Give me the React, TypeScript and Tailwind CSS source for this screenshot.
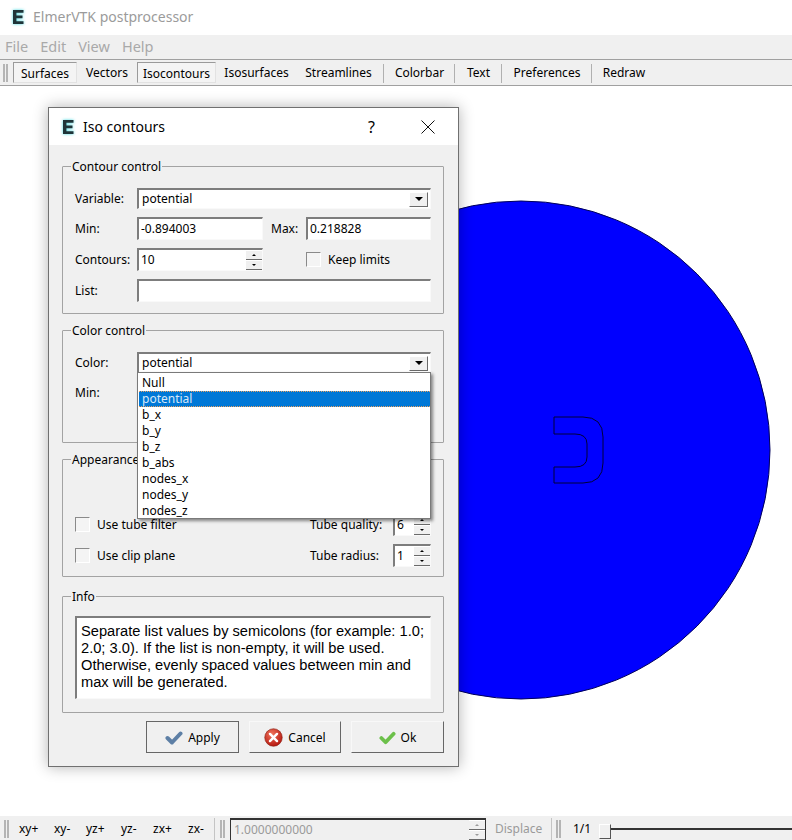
import type { ReactNode } from 'react'

const UI_FONT = "font-['Noto_Sans',sans-serif]"

const TOOLBAR_ITEMS = [
  { label: 'Surfaces', width: 'w-[64px]', checked: true },
  { label: 'Vectors', width: 'w-[60px]' },
  { label: 'Isocontours', width: 'w-[79px]', checked: true },
  { label: 'Isosurfaces', width: 'w-[81px]' },
  { label: 'Streamlines', width: 'w-[87px] pr-[4px]', sep: true },
  { label: 'Colorbar', width: 'w-[71px]', sep: true },
  { label: 'Text', width: 'w-[47px]', sep: true },
  { label: 'Preferences', width: 'w-[90px]', sep: true },
  { label: 'Redraw', width: 'w-[64px]' },
]

const COLOR_OPTIONS = ['Null', 'potential', 'b_x', 'b_y', 'b_z', 'b_abs', 'nodes_x', 'nodes_y', 'nodes_z']

function Logo({ className }: { className: string }) {
  return (
    <svg viewBox="0 0 11 14" className={`${className} drop-shadow-[0_0_1.5px_#3fd8e0]`}>
      <path d="M0 0H10.5V2.8H3.4V5.5H9.5V8.2H3.4V11.2H10.5V14H0Z" fill="#1f3438" />
    </svg>
  )
}

function Handle({ className = '' }: { className?: string }) {
  return (
    <div className={`flex gap-[1px] shrink-0 ${className}`}>
      <div className="w-[2px] border border-[#b4b4b4] bg-white" />
      <div className="w-[2px] border border-[#b4b4b4] bg-white" />
    </div>
  )
}

function Sunken({ className = '', children }: { className?: string; children?: ReactNode }) {
  return (
    <div
      className={`flex items-center bg-white border-t-2 border-l-2 border-r border-b border-t-[#7d7d7d] border-l-[#7d7d7d] border-r-[#f9f9f9] border-b-[#f9f9f9] ${className}`}
    >
      {children}
    </div>
  )
}

function ComboBox({ value }: { value: string }) {
  return (
    <Sunken className="h-[21px] w-[294px] pl-[3px] pr-[2px] justify-between">
      <span>{value}</span>
      <span className="flex h-[15px] w-[19px] items-center justify-center bg-[#f0f0f0] border border-t-white border-l-white border-r-[#6a6a6a] border-b-[#6a6a6a]">
        <span className="border-x-[4px] border-t-[4px] border-x-transparent border-t-black" />
      </span>
    </Sunken>
  )
}

function SpinBox({ value, className = '' }: { value: string; className?: string }) {
  return (
    <Sunken className={`justify-between pl-[2px] ${className}`}>
      <span>{value}</span>
      <SpinArrows />
    </Sunken>
  )
}

function SpinArrows({ disabled = false }: { disabled?: boolean }) {
  const arrow = disabled ? 'border-b-[#9a9a9a]' : 'border-b-black'
  const arrowDown = disabled ? 'border-t-[#9a9a9a]' : 'border-t-black'
  return (
    <span className="flex h-full w-[16px] shrink-0 flex-col bg-[#f0f0f0]">
      <span className="flex flex-1 items-center justify-center border-b border-b-[#6a6a6a] border-t border-t-white">
        <span className={`border-x-[2px] border-b-[2px] border-x-transparent ${arrow}`} />
      </span>
      <span className="flex flex-1 items-center justify-center border-b border-b-[#6a6a6a] border-t border-t-white">
        <span className={`border-x-[2px] border-t-[2px] border-x-transparent ${arrowDown}`} />
      </span>
    </span>
  )
}

function CheckBox({ label, className = '' }: { label: string; className?: string }) {
  return (
    <div className={`flex items-center gap-[7px] ${className}`}>
      <span className="h-[15px] w-[15px] bg-[#f4f4f4] border border-t-[#8a8a8a] border-l-[#8a8a8a] border-r-white border-b-white" />
      <span>{label}</span>
    </div>
  )
}

function Group({ title, className = '', children }: { title: string; className?: string; children: ReactNode }) {
  return (
    <fieldset className={`border border-[#a3a3a3] rounded-[1px] w-[382px] ml-[13px] px-[12px] ${className}`}>
      <legend className="-ml-[4px] px-[1px] leading-[14px] translate-y-[1px]">{title}</legend>
      {children}
    </fieldset>
  )
}

function DialogButton({
  children,
  width,
  icon,
  primary = false,
}: {
  children: ReactNode
  width: string
  icon: ReactNode
  primary?: boolean
}) {
  const edges = primary
    ? 'border-[#666]'
    : 'border-t-[#f8f8f8] border-l-[#f8f8f8] border-r-[#666] border-b-[#666]'
  return (
    <button className={`flex h-[32px] items-center justify-center gap-[5px] bg-[#f0f0f0] border pt-[1px] ${edges} ${width}`}>
      {icon}
      {children}
    </button>
  )
}

function ColorPopup() {
  return (
    <div className="absolute left-[88px] top-[264px] z-10 h-[147px] w-[294px] bg-white border border-[#7a7a7a] pt-[2px] shadow-[2px_2px_3px_rgba(0,0,0,0.45)]">
      {COLOR_OPTIONS.map((option) =>
        option === 'potential' ? (
          <div
            key={option}
            className="h-[16px] ml-[1px] pl-[3px] leading-[16px] bg-[#0078d7] text-[#d8e8f8] border-y border-dotted border-[#e8a060] flex items-center"
          >
            {option}
          </div>
        ) : (
          <div key={option} className="h-[16px] ml-[1px] pl-[3px] leading-[16px] text-black">
            {option}
          </div>
        ),
      )}
    </div>
  )
}

function IsoContoursDialog() {
  return (
    <div className="absolute left-[48px] top-[21px] h-[660px] w-[411px] bg-[#f0f0f0] border border-[#707070] shadow-[0_0_14px_rgba(0,0,0,0.3)] text-[12px] text-black">
      <div className="flex h-[37px] items-center bg-white pl-[14px]">
        <Logo className="h-[14px] w-[11px]" />
        <span className="ml-[9px] text-[14px]">Iso contours</span>
        <span className="ml-auto mr-[83px] text-[16px]">?</span>
      </div>
      <svg viewBox="0 0 14 14" className="absolute right-[23px] top-[12px] h-[14px] w-[14px]">
        <path d="M0.5 0.5L13.5 13.5M13.5 0.5L0.5 13.5" stroke="#111" strokeWidth="1" fill="none" />
      </svg>

      <Group title="Contour control" className="mt-[14px] h-[155px] pt-[15px]">
        <div className="flex items-center h-[21px]">
          <span className="w-[62px]">Variable:</span>
          <ComboBox value="potential" />
        </div>
        <div className="mt-[8px] flex items-center h-[23px]">
          <span className="w-[62px]">Min:</span>
          <Sunken className="h-[23px] w-[126px] pl-[2px]">-0.894003</Sunken>
          <span className="ml-[8px] w-[35px]">Max:</span>
          <Sunken className="h-[23px] w-[125px] pl-[2px]">0.218828</Sunken>
        </div>
        <div className="mt-[8px] flex items-center h-[23px]">
          <span className="w-[62px]">Contours:</span>
          <SpinBox value="10" className="h-[23px] w-[126px]" />
          <CheckBox label="Keep limits" className="ml-[43px]" />
        </div>
        <div className="mt-[8px] flex items-center h-[23px]">
          <span className="w-[62px]">List:</span>
          <Sunken className="h-[23px] w-[294px]" />
        </div>
      </Group>

      <Group title="Color control" className="mt-[9px] h-[120px] pt-[15px]">
        <div className="flex items-center h-[21px]">
          <span className="w-[62px]">Color:</span>
          <ComboBox value="potential" />
        </div>
        <div className="mt-[11px]">Min:</div>
      </Group>

      <Group title="Appearance" className="mt-[9px] h-[125px] pt-[47px]">
        <div className="flex items-center justify-between h-[23px]">
          <CheckBox label="Use tube filter" />
          <div className="flex items-center">
            <span className="w-[83px]">Tube quality:</span>
            <SpinBox value="6" className="h-[23px] w-[38px]" />
          </div>
        </div>
        <div className="mt-[8px] flex items-center justify-between h-[23px]">
          <CheckBox label="Use clip plane" />
          <div className="flex items-center">
            <span className="w-[83px]">Tube radius:</span>
            <SpinBox value="1" className="h-[23px] w-[38px]" />
          </div>
        </div>
      </Group>

      <Group title="Info" className="mt-[12px] h-[124px] pt-[13px]">
        <Sunken className="h-[83px] w-[356px] !items-start pl-[4px] pt-[5px] font-['Liberation_Sans',sans-serif] text-[14.67px] leading-[17px]">
          <p>
            Separate list values by semicolons (for example: 1.0; 2.0; 3.0). If the list is non-empty, it will be used.
            Otherwise, evenly spaced values between min and max will be generated.
          </p>
        </Sunken>
      </Group>

      <div className="mt-[8px] flex justify-end gap-[10px] pr-[14px]">
        <DialogButton
          primary
          width="w-[93px]"
          icon={
            <svg viewBox="0 0 18 14" className="h-[14px] w-[18px]">
              <path d="M2.5 7L7 11.5L15.5 2.5" fill="none" stroke="#5d7fa5" strokeWidth="4" strokeLinecap="round" strokeLinejoin="round" />
            </svg>
          }
        >
          Apply
        </DialogButton>
        <DialogButton
          width="w-[92px]"
          icon={
            <svg viewBox="0 0 20 20" className="h-[19px] w-[19px]">
              <defs>
                <radialGradient id="cancelFill" cx="40%" cy="30%" r="75%">
                  <stop offset="0%" stopColor="#f0745c" />
                  <stop offset="100%" stopColor="#b3130c" />
                </radialGradient>
              </defs>
              <circle cx="10" cy="10" r="9.2" fill="url(#cancelFill)" stroke="#8c1f14" strokeWidth="0.7" />
              <path d="M6.3 6.3L13.7 13.7M13.7 6.3L6.3 13.7" stroke="#fff" strokeWidth="2.6" strokeLinecap="round" />
            </svg>
          }
        >
          Cancel
        </DialogButton>
        <DialogButton
          width="w-[93px]"
          icon={
            <svg viewBox="0 0 18 14" className="h-[14px] w-[17px]">
              <path d="M2.5 7L7 11.5L15.5 2.5" fill="none" stroke="#6cc04a" strokeWidth="4" strokeLinecap="round" strokeLinejoin="round" />
            </svg>
          }
        >
          Ok
        </DialogButton>
      </div>

      <ColorPopup />
    </div>
  )
}

export default function App() {
  return (
    <div className={`flex h-[840px] w-[792px] flex-col overflow-hidden bg-white ${UI_FONT}`}>
      {/* Title bar */}
      <div className="flex h-[35px] items-center pl-[13px] pb-[2px] shrink-0">
        <Logo className="h-[14px] w-[11px]" />
        <span className="ml-[9px] text-[14px] text-[#9b9b9b]">ElmerVTK postprocessor</span>
      </div>

      {/* Menu */}
      <div className="flex h-[24px] items-center gap-[12px] bg-[#f0f0f0] pl-[5px] text-[14.5px] text-[#a9a9a9] shrink-0">
        <span>File</span>
        <span>Edit</span>
        <span>View</span>
        <span>Help</span>
      </div>

      {/* Main toolbar */}
      <div className="flex h-[27px] items-center bg-[#f0f0f0] border-y border-[#a0a0a0] pl-[3px] text-[12px] text-black shrink-0">
        <Handle className="h-[18px] mr-[5px]" />
        {TOOLBAR_ITEMS.map((item) => (
          <div key={item.label} className={`flex h-[21px] items-center justify-center shrink-0 ${item.width} relative`}>
            {item.checked ? (
              <span className="flex h-full w-full items-center justify-center pt-[2px] bg-[#f4f4f4] border border-t-[#9a9a9a] border-l-[#9a9a9a] border-r-[#e2e2e2] border-b-[#e2e2e2]">
                {item.label}
              </span>
            ) : (
              <span className="pt-[1px]">{item.label}</span>
            )}
            {item.sep && <span className="absolute right-0 top-[2px] bottom-0 w-px bg-[#b0b0b0]" />}
          </div>
        ))}
      </div>

      {/* Canvas */}
      <div className="relative flex-1 overflow-hidden bg-white">
        <svg viewBox="0 86 792 730" className="absolute inset-0 h-[730px] w-[792px]">
          <circle cx="521" cy="450" r="249" fill="#0000ff" stroke="#00005a" strokeWidth="1" />
          <path
            d="M554 417H583Q603 417 603 437V463Q603 483 583 483H554V467H575Q587 467 587 457V444Q587 434 575 434H554Z"
            fill="none"
            stroke="#00003a"
            strokeWidth="1"
          />
        </svg>
        <IsoContoursDialog />
      </div>

      {/* Bottom toolbar */}
      <div className="flex h-[24px] items-center bg-[#f0f0f0] pt-[2px] text-[12px] text-black shrink-0">
        <Handle className="ml-[4px] h-[18px]" />
        <div className="ml-[10px] flex w-[195px]">
          <span className="w-[35px]">xy+</span>
          <span className="w-[32px]">xy-</span>
          <span className="w-[35px]">yz+</span>
          <span className="w-[32px]">yz-</span>
          <span className="w-[35px]">zx+</span>
          <span>zx-</span>
        </div>
        <div className="h-full w-px bg-[#c4c4c4]" />
        <Handle className="ml-[5px] h-[18px]" />
        <div className="ml-[5px] flex h-[22px] w-[256px] self-end items-center justify-between bg-[#f0f0f0] border-t-2 border-l border-r border-[#333] pl-[3px] text-[#9a9a9a]">
          <span>1.0000000000</span>
          <SpinArrows disabled />
        </div>
        <span className="ml-[9px] w-[56px] text-[#9a9a9a]">Displace</span>
        <div className="h-full w-px bg-[#c4c4c4]" />
        <Handle className="ml-[4px] h-[18px]" />
        <span className="ml-[12px] w-[26px]">1/1</span>
        <div className="h-[15px] w-[12px] self-end mb-[1px] bg-[#f0f0f0] border border-t-white border-l-white border-r-[#555] border-b-[#555] shrink-0" />
        <div className="h-[2px] flex-1 bg-[#333]" />
      </div>
    </div>
  )
}
